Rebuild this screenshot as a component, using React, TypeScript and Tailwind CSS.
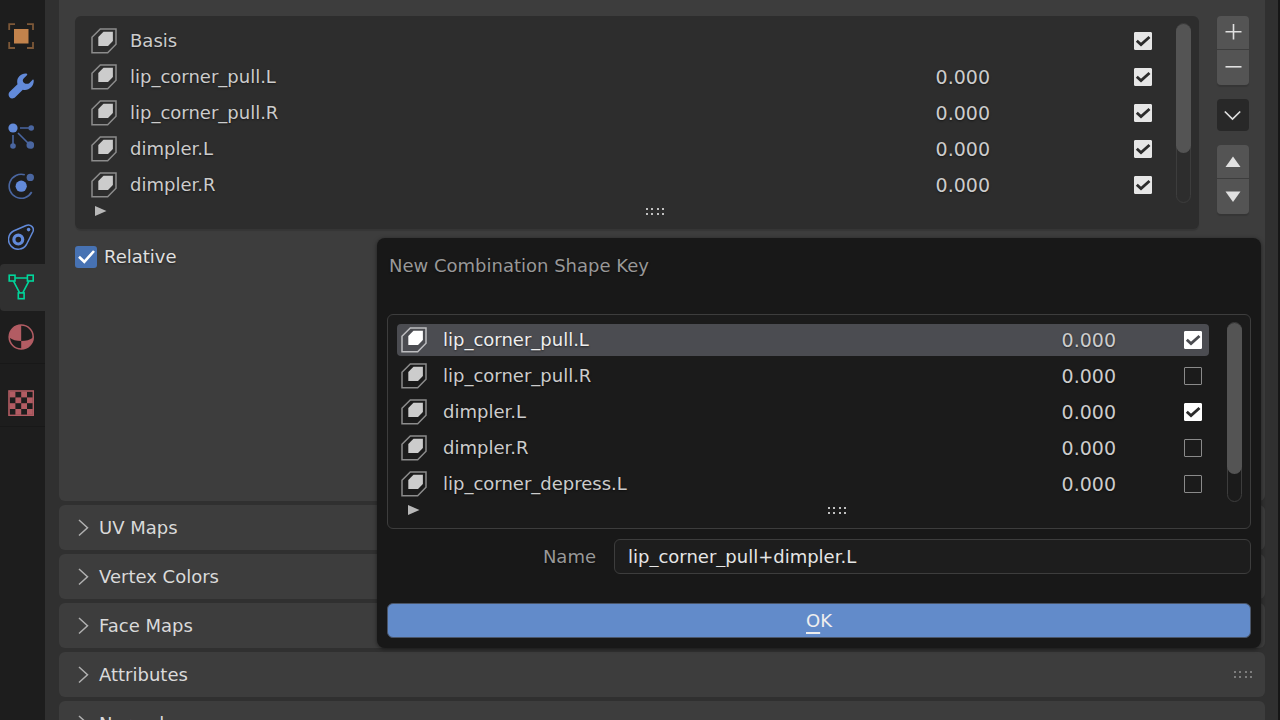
import React, { useState } from "react";

type ShapeKey = { name: string; value?: string; checked: boolean };

const mainKeys: ShapeKey[] = [
  { name: "Basis", checked: true },
  { name: "lip_corner_pull.L", value: "0.000", checked: true },
  { name: "lip_corner_pull.R", value: "0.000", checked: true },
  { name: "dimpler.L", value: "0.000", checked: true },
  { name: "dimpler.R", value: "0.000", checked: true },
];

const dialogKeys: ShapeKey[] = [
  { name: "lip_corner_pull.L", value: "0.000", checked: true },
  { name: "lip_corner_pull.R", value: "0.000", checked: false },
  { name: "dimpler.L", value: "0.000", checked: true },
  { name: "dimpler.R", value: "0.000", checked: false },
  { name: "lip_corner_depress.L", value: "0.000", checked: false },
];

const panels = ["UV Maps", "Vertex Colors", "Face Maps", "Attributes", "Normals"];

function ShapeKeyIcon({ active }: { active?: boolean }) {
  return (
    <svg viewBox="0 0 26 26" className="size-[26px] shrink-0" aria-hidden="true">
      <path
        d="M1 9.3 9.3 1H25V16.3L16.7 24.7H1Z"
        fill="none"
        stroke={active ? "#bdbdc0" : "#8c8c8c"}
        strokeWidth="1.5"
      />
      <path d="M7.3 9 12.5 3.8H21.9V13L17 18H7.3Z" fill={active ? "#ffffff" : "#cccccc"} />
    </svg>
  );
}

function KeyCheckbox({ item, bright, active }: { item: ShapeKey; bright?: boolean; active?: boolean }) {
  return (
    <span className="grid size-[18px] shrink-0">
      <input
        type="checkbox"
        defaultChecked={item.checked}
        aria-label={`Enable ${item.name}`}
        className={
          "peer col-start-1 row-start-1 size-[18px] appearance-none rounded-[1px] border border-[#8a8a8a] " +
          (bright ? "checked:border-white checked:bg-white" : "checked:border-[#e6e6e6] checked:bg-[#e6e6e6]")
        }
      />
      <svg
        viewBox="0 0 18 18"
        className="pointer-events-none invisible col-start-1 row-start-1 size-[18px] peer-checked:visible"
        aria-hidden="true"
      >
        <path d="M2.8 8.8 7 12.6 15.5 5" fill="none" stroke={active ? "#4b4c51" : "#2b2b2b"} strokeWidth="2.8" />
      </svg>
    </span>
  );
}

function Grip({ className }: { className: string }) {
  return (
    <svg viewBox="0 0 20 8" className={"h-2 w-5 " + className} fill="currentColor" aria-hidden="true">
      {[0, 5, 11, 16].map((x) => (
        <g key={x}>
          <rect x={x + 1} y="0" width="2" height="2" />
          <rect x={x + 1} y="5" width="2" height="2" />
        </g>
      ))}
    </svg>
  );
}

function KeyList({
  items,
  activeIndex = -1,
  popup,
  valueGap,
  thumb,
  className,
}: {
  items: ShapeKey[];
  activeIndex?: number;
  popup?: boolean;
  valueGap: string;
  thumb: string;
  className: string;
}) {
  return (
    <div className={"flex flex-col rounded-md " + className}>
      <div className="flex gap-[18px] pr-2 pl-[9px]">
        <ul className="flex grow flex-col gap-1 pt-[9px]">
          {items.map((item, i) => (
            <li
              key={item.name}
              className={
                "flex h-8 items-center rounded " +
                (popup ? "gap-4 pr-[7px] pl-1 " : "gap-[13px] pr-[6px] pl-[7px] ") +
                (i === activeIndex ? "bg-[#4b4c51] text-[#eeeeee]" : "text-[#cccccc]")
              }
            >
              <ShapeKeyIcon active={i === activeIndex} />
              <span className="grow">{item.name}</span>
              <span className={"flex items-center " + valueGap}>
                <span className="text-[19px] text-[#cccccc]">{item.value}</span>
                <KeyCheckbox item={item} bright={popup} active={i === activeIndex} />
              </span>
            </li>
          ))}
        </ul>
        <div className="mt-[7px] h-[180px] w-[15px] rounded-full border border-[#3d3d3d]">
          <div className={"-mx-px w-[15px] rounded-full bg-[#545454] " + thumb} />
        </div>
      </div>
      <div className="relative flex h-[26px] items-start justify-center">
        <button aria-label="Show filters" className="absolute top-0 left-5 flex h-4 w-3 items-center">
          <svg viewBox="0 0 12 10" className="h-[10px] w-3" aria-hidden="true">
            <path d="M0 0 11.5 5 0 10Z" fill="#b8b8b8" />
          </svg>
        </button>
        <Grip className="mt-[5px] ml-9 text-[#c0c0c0]" />
      </div>
    </div>
  );
}

const blue = "#628ad9";
const dimBlue = "#4a66a0";

const tabs: { label: string; icon: React.ReactNode }[] = [
  {
    label: "Object",
    icon: (
      <>
        <rect x="6" y="6" width="14.5" height="14.5" fill="#c3834c" />
        <path d="M1.2 7V1.2H7M19 1.2H25V7M25 19V25H19M7 25H1.2V19" fill="none" stroke="#7d5838" strokeWidth="1.8" />
      </>
    ),
  },
  {
    label: "Modifiers",
    icon: (
      <path
        d="M17.5.6C12 .8 8 5.5 9.5 11.2L1.7 18.8C-.6 21 .8 25.5 4.3 25.5 5.6 25.5 6.5 25 7.2 24.3L14.8 16.7C20.8 18.2 26.3 13.2 25.7 7.2 25.6 6.3 24.9 6.4 24.4 6.9L21.2 10.2C19.5 11.6 14.6 10.8 14.8 7.3 14.8 6.5 15.3 5.9 15.9 5.3L18.9 2.3C19.7 1.5 19.2.6 17.5.6Z"
        fill={blue}
      />
    ),
  },
  {
    label: "Particles",
    icon: (
      <>
        <path d="M12 5H22M5 12V22M10 10 21 21" stroke={dimBlue} strokeWidth="1.6" />
        <circle cx="23.2" cy="5" r="2.8" fill={dimBlue} />
        <circle cx="5" cy="23" r="2.8" fill={dimBlue} />
        <circle cx="22.3" cy="22" r="3.8" fill={dimBlue} />
        <circle cx="5" cy="5" r="4.6" fill={blue} />
      </>
    ),
  },
  {
    label: "Physics",
    icon: (
      <>
        <path d="M16.8 1.8A12 12 0 1 0 23.7 19" fill="none" stroke={dimBlue} strokeWidth="1.6" />
        <circle cx="22.3" cy="4.4" r="3.7" fill={dimBlue} />
        <circle cx="13.2" cy="13.2" r="5.6" fill={blue} />
      </>
    ),
  },
  {
    label: "Constraints",
    icon: (
      <>
        <path
          d="M18.2 1.5 5.5 7A9.7 9.7 0 1 0 18.5 20.5L25 7.5C26.5 3.5 22.5-.3 18.2 1.5Z"
          fill="none"
          stroke={blue}
          strokeWidth="1.5"
        />
        <circle cx="10.3" cy="15.6" r="4.4" fill="none" stroke={blue} strokeWidth="3.2" />
        <circle cx="20.6" cy="5.6" r="1.8" fill={blue} />
      </>
    ),
  },
  {
    label: "Object Data",
    icon: (
      <g fill="none" stroke="#00d69b" strokeWidth="1.6">
        <path d="M7.2 4H19.2M5.5 7.2 11.5 18.7M20.9 7.2 14.9 18.7" />
        <rect x="1.2" y="1.2" width="5.8" height="5.8" />
        <rect x="19.4" y="1.2" width="5.8" height="5.8" />
        <rect x="10.3" y="18.9" width="5.8" height="5.8" />
      </g>
    ),
  },
  {
    label: "Material",
    icon: (
      <>
        <circle cx="13.2" cy="13" r="12" fill="none" stroke="#b25c63" strokeWidth="1.6" />
        <path d="M13.2 1A12 12 0 0 0 1.2 13.5Q6 17 13.2 17Z" fill="#b25c63" />
        <path d="M13.2 17Q20.500 17 25.2 13.5A12 12 0 0 1 13.2 25Z" fill="#b25c63" />
      </>
    ),
  },
];

const checkerCells = [0, 1, 2, 3].flatMap((r) => [0, 1, 2, 3].filter((c) => (r + c) % 2 === 0).map((c) => [c, r]));

function TabButton({ label, active, children }: { label: string; active?: boolean; children: React.ReactNode }) {
  return (
    <button
      aria-label={label}
      title={label}
      className={"flex h-[47px] w-full items-center rounded-l pl-2 " + (active ? "bg-[#303030]" : "")}
    >
      <svg viewBox="0 0 26 26" className="size-[26px]" aria-hidden="true">
        {children}
      </svg>
    </button>
  );
}

function SideButton({ label, className, children }: { label: string; className: string; children: React.ReactNode }) {
  return (
    <button aria-label={label} className={"flex w-8 items-center justify-center " + className}>
      <svg viewBox="0 0 18 18" className="size-[18px]" aria-hidden="true">
        {children}
      </svg>
    </button>
  );
}

export default function App() {
  const [name, setName] = useState("lip_corner_pull+dimpler.L");
  return (
    <div className="relative flex h-screen overflow-hidden border-r-2 border-[#161616] bg-[#303030] font-['DejaVu_Sans','Liberation_Sans',sans-serif] text-[18px] leading-6 [text-shadow:0_1px_2px_rgba(0,0,0,0.5)]">
      <nav aria-label="Properties tabs" className="w-[45px] shrink-0 bg-[#1d1d1d] pt-3">
        <div className="flex h-[352px] flex-col justify-between border-b border-[#181818] pb-[2px]">
          {tabs.map((t) => (
            <TabButton key={t.label} label={t.label} active={t.label === "Object Data"}>
              {t.icon}
            </TabButton>
          ))}
        </div>
        <div className="border-b border-[#181818] pt-[15px]">
          <TabButton label="Texture">
            <rect x="1" y="1" width="24.4" height="24.4" fill="none" stroke="#b25c63" strokeWidth="1.6" />
            {checkerCells.map(([c, r]) => (
              <rect key={`${c}-${r}`} x={1.6 + c * 5.8} y={1.6 + r * 5.8} width="5.8" height="5.8" fill="#b25c63" />
            ))}
          </TabButton>
        </div>
      </nav>

      <main className="flex min-w-0 grow flex-col gap-1 pr-[13px] pl-[14px]">
        <section className="min-h-[501px] shrink-0 rounded-b-md bg-[#3d3d3d] px-4 pt-4">
          <div className="flex items-start gap-[18px]">
            <KeyList
              items={mainKeys}
              valueGap="gap-36"
              thumb="h-[129px]"
              className="grow bg-[#2d2d2d] shadow-[0_2px_1px_rgba(0,0,0,0.12)]"
            />
            <div className="flex flex-col gap-[14px] text-[#e0e0e0]">
              <div className="flex flex-col gap-px rounded shadow-[0_2px_1px_rgba(0,0,0,0.12)]">
                <SideButton label="Add shape key" className="h-[33px] rounded-t bg-[#545454]">
                  <path d="M9.5 0V15.6M1.5 7.8H17.5" stroke="currentColor" strokeWidth="1.6" />
                </SideButton>
                <SideButton label="Remove shape key" className="h-[35px] rounded-b bg-[#545454]">
                  <path d="M1.5 7.8H17.5" stroke="currentColor" strokeWidth="1.6" />
                </SideButton>
              </div>
              <SideButton label="Shape key specials" className="h-8 rounded bg-[#282828]">
                <path d="M.8 5.5 8.5 13 16.2 5.5" fill="none" stroke="currentColor" strokeWidth="1.7" />
              </SideButton>
              <div className="flex flex-col gap-px rounded shadow-[0_2px_1px_rgba(0,0,0,0.12)]">
                <SideButton label="Move up" className="h-[33px] rounded-t bg-[#545454]">
                  <path d="M1.5 14 9 3.5 16.5 14Z" fill="currentColor" />
                </SideButton>
                <SideButton label="Move down" className="h-[35px] rounded-b bg-[#545454]">
                  <path d="M1.5 3.5H16.5L9 14Z" fill="currentColor" />
                </SideButton>
              </div>
            </div>
          </div>
          <label className="mt-4 flex w-fit items-center gap-[7px] text-[#e0e0e0]">
            <span className="grid size-[22px]">
              <input
                type="checkbox"
                defaultChecked
                className="peer col-start-1 row-start-1 size-[22px] appearance-none rounded-[3px] bg-[#545454] checked:bg-[#4772b3]"
              />
              <svg
                viewBox="0 0 22 22"
                className="pointer-events-none invisible col-start-1 row-start-1 size-[22px] peer-checked:visible"
                aria-hidden="true"
              >
                <path d="M4 10.8 9.3 15.8 19 5" fill="none" stroke="#ffffff" strokeWidth="2.6" />
              </svg>
            </span>
            Relative
          </label>
        </section>

        {panels.map((p) => (
          <section key={p} className="shrink-0 rounded-md bg-[#3d3d3d]">
            <button className="flex h-[45px] w-full items-center pr-3 pl-[19px] text-left text-[#dadada]">
              <svg viewBox="0 0 11 18" className="h-[18px] w-[11px]" aria-hidden="true">
                <path d="M1 1 9.5 8.7 1 16.5" fill="none" stroke="#b0b0b0" strokeWidth="1.5" />
              </svg>
              <span className="ml-[10px] grow">{p}</span>
              <Grip className="text-[#7d7d7d]" />
            </button>
          </section>
        ))}
      </main>

      <form
        role="dialog"
        aria-labelledby="dialog-title"
        onSubmit={(e) => e.preventDefault()}
        className="absolute top-[238px] right-[17px] left-[377px] flex flex-col rounded-lg bg-[#181818] px-[10px] pt-4 pb-[10px] shadow-[0_1px_4px_rgba(0,0,0,0.5)]"
      >
        <h2 id="dialog-title" className="px-[2px] text-[#989898]">
          New Combination Shape Key
        </h2>
        <KeyList
          items={dialogKeys}
          activeIndex={0}
          popup
          valueGap="gap-[68px]"
          thumb="h-[151px]"
          className="mt-9 border border-[#3d3d3d] bg-[#1b1b1b]"
        />
        <div className="mt-[10px] flex items-center">
          <label htmlFor="key-name" className="w-[209px] text-right text-[#989898]">
            Name
          </label>
          <input
            id="key-name"
            value={name}
            onChange={(e) => setName(e.target.value)}
            className="ml-[18px] h-[35px] min-w-0 grow rounded-md border border-[#3d3d3d] bg-[#1d1d1d] px-[13px] text-[#e6e6e6]"
          />
        </div>
        <button
          type="submit"
          className="mt-[29px] h-[35px] rounded-md border border-[#4a5568] bg-[#628bca] text-[#eeeeee]"
        >
          <span className="underline decoration-2 underline-offset-[5px]">O</span>K
        </button>
      </form>
    </div>
  );
}
